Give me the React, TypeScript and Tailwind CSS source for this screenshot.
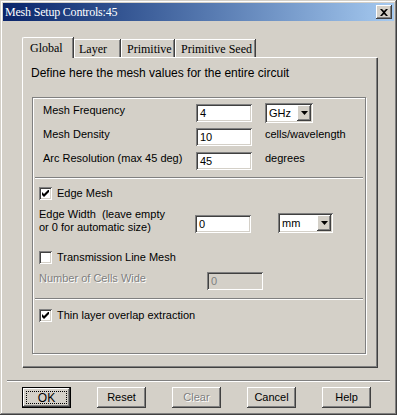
import React from "react";

const sans = { fontFamily: '"Liberation Sans", Arial, sans-serif' };
const serif = { fontFamily: '"Liberation Serif", "Times New Roman", serif' };

function Raised({ className = "", children }: { className?: string; children?: React.ReactNode }) {
  return (
    <div
      className={
        "bg-[#d4d0c8] shadow-[inset_-1px_-1px_0_#404040,inset_1px_1px_0_#fff,inset_-2px_-2px_0_#808080] " +
        className
      }
    >
      {children}
    </div>
  );
}

function Sunken({ className = "", children }: { className?: string; children?: React.ReactNode }) {
  return (
    <div
      className={
        "shadow-[inset_1px_1px_0_#808080,inset_-1px_-1px_0_#fff,inset_2px_2px_0_#404040,inset_-2px_-2px_0_#d4d0c8] " +
        className
      }
    >
      {children}
    </div>
  );
}

function TextBox({ value, w = "w-[56px]", disabled = false }: { value: string; w?: string; disabled?: boolean }) {
  return (
    <Sunken
      className={
        w +
        " h-[18px] flex items-center pl-[4px] text-[11px] leading-none " +
        (disabled ? "bg-[#d4d0c8] text-[#808080]" : "bg-white text-black")
      }
    >
      <span style={sans}>{value}</span>
    </Sunken>
  );
}

function Arrow() {
  return (
    <svg width="7" height="4" viewBox="0 0 7 4">
      <path d="M0 0h7L3.5 4z" fill="#000" />
    </svg>
  );
}

function Select({ value, w }: { value: string; w: string }) {
  return (
    <Sunken className={w + " h-[20px] bg-white flex items-center justify-between pl-[4px] pr-[2px]"}>
      <span style={sans} className="text-[11px] leading-none text-black">
        {value}
      </span>
      <Raised className="w-[14px] h-[16px] flex items-center justify-center">
        <Arrow />
      </Raised>
    </Sunken>
  );
}

function CheckBox({ checked }: { checked: boolean }) {
  return (
    <Sunken className="w-[13px] h-[13px] bg-white flex items-center justify-center shrink-0">
      {checked && (
        <svg width="7" height="7" viewBox="0 0 7 7">
          <path d="M0 2v3l2 2 5-5V-1L2 4z" fill="#000" />
        </svg>
      )}
    </Sunken>
  );
}

function Separator() {
  return <div className="h-[2px] mx-[2px] border-t border-[#808080] border-b border-b-white" />;
}

function Button({ label, def = false, disabled = false }: { label: string; def?: boolean; disabled?: boolean }) {
  if (def) {
    return (
      <div className="w-[49px] h-[21px] border border-black">
        <Raised className="w-full h-full flex items-center justify-center p-[3px]">
          <div className="w-full h-full border border-dotted border-black flex items-center justify-center">
            <span style={sans} className="text-[12px] leading-none text-black">
              {label}
            </span>
          </div>
        </Raised>
      </div>
    );
  }
  return (
    <Raised className="w-[49px] h-[21px] flex items-center justify-center">
      <span
        style={sans}
        className={
          "text-[11px] leading-none " + (disabled ? "text-[#808080] [text-shadow:1px_1px_0_#fff]" : "text-black")
        }
      >
        {label}
      </span>
    </Raised>
  );
}

export default function App() {
  return (
    <div
      className="w-[397px] h-[415px] bg-[#d4d0c8] p-[3px] flex flex-col shadow-[inset_-1px_-1px_0_#404040,inset_1px_1px_0_#d4d0c8,inset_-2px_-2px_0_#808080,inset_2px_2px_0_#fff]"
    >
      {/* Title bar */}
      <div className="h-[18px] bg-gradient-to-r from-[#0a246a] to-[#a6caf0] flex items-center justify-between pl-[2px] pr-[2px]">
        <span style={serif} className="text-white text-[12px] leading-none tracking-[-0.2px]">
          Mesh Setup Controls:45
        </span>
        <Raised className="w-[16px] h-[14px] flex items-center justify-center">
          <svg width="8" height="7" viewBox="0 0 8 7">
            <path d="M0 0h2l2 2 2-2h2L5 3.5 8 7H6L4 5 2 7H0l3-3.5z" fill="#000" />
          </svg>
        </Raised>
      </div>

      {/* Body */}
      <div className="flex flex-col pl-[19px] pt-[16px]">
        {/* Tabs */}
        <div className="flex items-end h-[20px] relative z-10">
          <div className="w-[51px] h-[21px] mb-[-1px] bg-[#d4d0c8] border-l border-t border-white rounded-tl-[2px] shadow-[inset_-1px_0_0_#808080,1px_0_0_#404040] flex items-center pl-[7px]">
            <span style={serif} className="text-[12px] leading-none text-black">
              Global
            </span>
          </div>
          <div className="w-[46px] h-[18px] ml-[1px] border-l border-t border-white shadow-[inset_-1px_0_0_#808080,1px_0_0_#404040] flex items-center pl-[4px]">
            <span style={serif} className="text-[12px] leading-none text-black">
              Layer
            </span>
          </div>
          <div className="w-[53px] h-[18px] ml-[1px] border-l border-t border-white shadow-[inset_-1px_0_0_#808080,1px_0_0_#404040] flex items-center pl-[5px]">
            <span style={serif} className="text-[12px] leading-none text-black">
              Primitive
            </span>
          </div>
          <div className="w-[80px] h-[18px] ml-[1px] border-l border-t border-white shadow-[inset_-1px_0_0_#808080,1px_0_0_#404040] flex items-center pl-[5px]">
            <span style={serif} className="text-[12px] leading-none text-black">
              Primitive Seed
            </span>
          </div>
        </div>

        {/* Panel */}
        <div className="w-[355px] h-[310px] border-l border-t border-white shadow-[inset_-1px_-1px_0_#808080,1px_1px_0_#404040] flex flex-col">
          <div style={sans} className="text-[12px] leading-[13px] text-black pl-[8px] pt-[9px]">
            Define here the mesh values for the entire circuit
          </div>

          {/* Group */}
          <div className="ml-[9px] mt-[17px] w-[334px] h-[257px] border border-[#808080] shadow-[inset_1px_1px_0_#fff,1px_1px_0_#fff] flex flex-col pt-[6px]">
            <div className="flex flex-col gap-[6px] pl-[10px]" style={sans}>
              <div className="flex items-start h-[18px]">
                <div className="w-[153px] text-[11px] leading-[13px] text-black">Mesh Frequency</div>
                <TextBox value="4" />
                <div className="ml-[13px] -mt-[1px]">
                  <Select value="GHz" w="w-[48px]" />
                </div>
              </div>
              <div className="flex items-start h-[18px]">
                <div className="w-[153px] text-[11px] leading-[13px] text-black">Mesh Density</div>
                <TextBox value="10" />
                <div className="ml-[13px] text-[11px] leading-[13px] text-black">cells/wavelength</div>
              </div>
              <div className="flex items-start h-[18px]">
                <div className="w-[153px] text-[11px] leading-[13px] text-black">Arc Resolution (max 45 deg)</div>
                <TextBox value="45" />
                <div className="ml-[13px] text-[11px] leading-[13px] text-black">degrees</div>
              </div>
            </div>

            <div className="mt-[7px]">
              <Separator />
            </div>

            <div className="flex flex-col pl-[6px]" style={sans}>
              <div className="flex items-center gap-[5px] mt-[8px] h-[13px]">
                <CheckBox checked />
                <span className="text-[11px] leading-[13px] text-black">Edge Mesh</span>
              </div>
              <div className="flex items-start mt-[8px]">
                <div className="w-[156px] text-[11px] leading-[13px] text-black">
                  Edge Width&nbsp; (leave empty
                  <br />
                  or 0 for automatic size)
                </div>
                <div className="mt-[7px]">
                  <TextBox value="0" />
                </div>
                <div className="ml-[27px] mt-[5px]">
                  <Select value="mm" w="w-[55px]" />
                </div>
              </div>
              <div className="flex items-center gap-[5px] mt-[17px] h-[13px]">
                <CheckBox checked={false} />
                <span className="text-[11px] leading-[13px] text-black">Transmission Line Mesh</span>
              </div>
              <div className="flex items-start mt-[8px]">
                <div className="w-[168px] text-[11px] leading-[13px] text-[#808080] [text-shadow:1px_1px_0_#fff]">
                  Number of Cells Wide
                </div>
                <TextBox value="0" disabled />
              </div>
            </div>

            <div className="mt-[8px]">
              <Separator />
            </div>

            <div className="flex items-center gap-[5px] mt-[9px] h-[13px] pl-[6px]" style={sans}>
              <CheckBox checked />
              <span className="text-[11px] leading-[13px] text-black">Thin layer overlap extraction</span>
            </div>
          </div>
        </div>
      </div>

      {/* Bottom separator */}
      <div className="mt-[13px] mx-[4px] h-[2px] border-t border-[#808080] border-b border-b-white" />

      {/* Buttons */}
      <div className="flex gap-[26px] pl-[19px] mt-[5px]">
        <Button label="OK" def />
        <Button label="Reset" />
        <Button label="Clear" disabled />
        <Button label="Cancel" />
        <Button label="Help" />
      </div>
    </div>
  );
}
